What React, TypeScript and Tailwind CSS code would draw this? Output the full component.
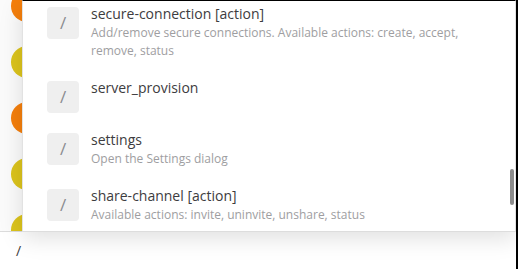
import React from "react";

type Command = {
  name: string;
  hint?: string;
};

const commands: Command[] = [
  {
    name: "secure-connection [action]",
    hint: "Add/remove secure connections. Available actions: create, accept, remove, status",
  },
  { name: "server_provision" },
  { name: "settings", hint: "Open the Settings dialog" },
  {
    name: "share-channel [action]",
    hint: "Available actions: invite, uninvite, unshare, status",
  },
];

const avatars = [
  { letter: "C", color: "bg-[#f57f0c]" },
  { letter: "V", color: "bg-[#dcc41c]" },
  { letter: "C", color: "bg-[#f57f0c]" },
  { letter: "V", color: "bg-[#dcc41c]" },
  { letter: "C", color: "bg-[#dcc41c]" },
];

function CommandRow({ cmd }: { cmd: Command }) {
  return (
    <div className="flex min-h-[52px] items-start gap-3 px-6 py-[9px]">
      <div className="flex h-8 w-8 shrink-0 items-center justify-center rounded bg-[#efefef] text-[17px] text-[#8a8b8f]">
        /
      </div>
      <div className="-mt-[3px] flex min-w-0 flex-1 flex-col pb-[3px] pr-4">
        <div className="text-[14px] leading-5 text-[#3d3c40]">{cmd.name}</div>
        {cmd.hint && (
          <div className="text-[12px] leading-[18px] text-[#9e9ea1]">{cmd.hint}</div>
        )}
      </div>
    </div>
  );
}

export default function App() {
  return (
    <div
      className="relative flex h-[269px] w-[518px] flex-col overflow-hidden border-r-2 border-black bg-white"
      style={{ fontFamily: '"Open Sans", "Noto Sans", sans-serif' }}
    >
      {/* message list behind the suggestion popup */}
      <div className="flex h-[231px] flex-col bg-[#fbfbfb] pl-[11px]">
        <div className="-mt-[10px] flex flex-col gap-6">
          {avatars.map((a, i) => (
            <div
              key={i}
              className={`flex h-8 w-8 items-center justify-center rounded-full text-[14px] font-semibold text-white ${a.color}`}
            >
              {a.letter}
            </div>
          ))}
        </div>
      </div>

      {/* input */}
      <div className="flex flex-1 items-center border-t border-[#dcdcdc] bg-white pl-4 text-[14px] text-[#3d3c40]">
        /
      </div>

      {/* suggestion list */}
      <div className="absolute left-[22px] right-0 top-0 z-10 h-[232px] overflow-hidden border border-b-[#dddddd] border-l-[#e2e2e2] border-r-[#e2e2e2] border-t-black bg-white shadow-[0_6px_22px_rgba(0,0,0,0.13)]">
        <div className="-mt-[3px]">
          {commands.map((c) => (
            <CommandRow key={c.name} cmd={c} />
          ))}
        </div>
        <div className="absolute right-[1px] top-[168px] h-[36px] w-[4px] rounded-full bg-[#8c8c8c]" />
      </div>
    </div>
  );
}
